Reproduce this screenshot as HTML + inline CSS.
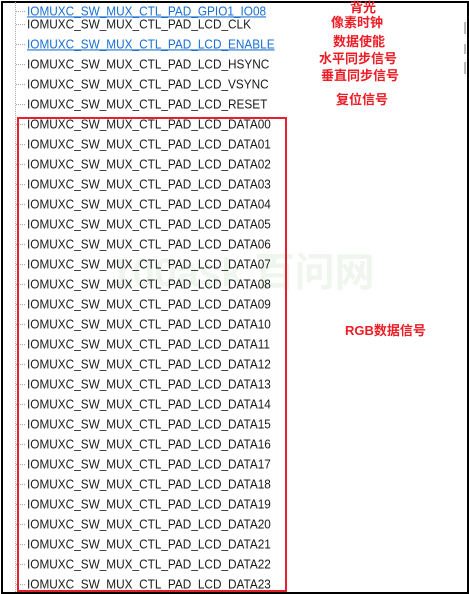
<!DOCTYPE html>
<html><head><meta charset="utf-8"><style>
body{margin:0;width:469px;height:594px;background:#fff;position:relative;overflow:hidden;font-family:"Liberation Sans","Noto Sans CJK SC",sans-serif}
.frame{position:absolute;left:1px;top:1px;width:464px;height:589px;border:2px solid #000}
.vl{position:absolute;left:15px;top:2px;height:590px;border-left:1px dotted #aaa}
.r{position:absolute;left:27px;font-size:11.8px;color:#1a1a1a;line-height:14px;white-space:nowrap;transform:scaleY(1.08)}
.r:before{content:"";position:absolute;left:-11px;top:7px;width:9px;border-top:1px dotted #aaa}
.l{color:#1a6fd0;text-decoration:underline}
.box{position:absolute;left:17px;top:117px;width:266px;height:471px;border:2px solid #e8202a}
.c{position:absolute;color:#ee1c25;font-weight:bold;font-size:13px;white-space:nowrap;line-height:15px}
.wm{position:absolute;left:110px;top:240px;font-size:40px;font-weight:bold;color:#eef6ee}
.sb{position:absolute;left:464px;width:2px;background:#bbb}
</style></head><body>
<div class="frame"></div>
<div class="vl"></div>
<div class="wm">100ask 百问网</div>
<div class="sb" style="top:22px;height:12px"></div>
<div class="sb" style="top:44px;height:10px"></div>
<div class="sb" style="top:62px;height:12px"></div>
<div class="r l" style="top:4px">IOMUXC_SW_MUX_CTL_PAD_GPIO1_IO08</div>
<div class="r" style="top:17px">IOMUXC_SW_MUX_CTL_PAD_LCD_CLK</div>
<div class="r l" style="top:37px">IOMUXC_SW_MUX_CTL_PAD_LCD_ENABLE</div>
<div class="r" style="top:57px">IOMUXC_SW_MUX_CTL_PAD_LCD_HSYNC</div>
<div class="r" style="top:77px">IOMUXC_SW_MUX_CTL_PAD_LCD_VSYNC</div>
<div class="r" style="top:97px">IOMUXC_SW_MUX_CTL_PAD_LCD_RESET</div>
<div class="r" style="top:117px">IOMUXC_SW_MUX_CTL_PAD_LCD_DATA00</div>
<div class="r" style="top:137px">IOMUXC_SW_MUX_CTL_PAD_LCD_DATA01</div>
<div class="r" style="top:157px">IOMUXC_SW_MUX_CTL_PAD_LCD_DATA02</div>
<div class="r" style="top:177px">IOMUXC_SW_MUX_CTL_PAD_LCD_DATA03</div>
<div class="r" style="top:197px">IOMUXC_SW_MUX_CTL_PAD_LCD_DATA04</div>
<div class="r" style="top:217px">IOMUXC_SW_MUX_CTL_PAD_LCD_DATA05</div>
<div class="r" style="top:237px">IOMUXC_SW_MUX_CTL_PAD_LCD_DATA06</div>
<div class="r" style="top:257px">IOMUXC_SW_MUX_CTL_PAD_LCD_DATA07</div>
<div class="r" style="top:277px">IOMUXC_SW_MUX_CTL_PAD_LCD_DATA08</div>
<div class="r" style="top:297px">IOMUXC_SW_MUX_CTL_PAD_LCD_DATA09</div>
<div class="r" style="top:317px">IOMUXC_SW_MUX_CTL_PAD_LCD_DATA10</div>
<div class="r" style="top:337px">IOMUXC_SW_MUX_CTL_PAD_LCD_DATA11</div>
<div class="r" style="top:357px">IOMUXC_SW_MUX_CTL_PAD_LCD_DATA12</div>
<div class="r" style="top:377px">IOMUXC_SW_MUX_CTL_PAD_LCD_DATA13</div>
<div class="r" style="top:397px">IOMUXC_SW_MUX_CTL_PAD_LCD_DATA14</div>
<div class="r" style="top:417px">IOMUXC_SW_MUX_CTL_PAD_LCD_DATA15</div>
<div class="r" style="top:437px">IOMUXC_SW_MUX_CTL_PAD_LCD_DATA16</div>
<div class="r" style="top:457px">IOMUXC_SW_MUX_CTL_PAD_LCD_DATA17</div>
<div class="r" style="top:477px">IOMUXC_SW_MUX_CTL_PAD_LCD_DATA18</div>
<div class="r" style="top:497px">IOMUXC_SW_MUX_CTL_PAD_LCD_DATA19</div>
<div class="r" style="top:517px">IOMUXC_SW_MUX_CTL_PAD_LCD_DATA20</div>
<div class="r" style="top:537px">IOMUXC_SW_MUX_CTL_PAD_LCD_DATA21</div>
<div class="r" style="top:557px">IOMUXC_SW_MUX_CTL_PAD_LCD_DATA22</div>
<div class="r" style="top:577px">IOMUXC_SW_MUX_CTL_PAD_LCD_DATA23</div>
<div class="box"></div>
<div class="c" style="left:350px;top:0px">背光</div>
<div class="c" style="left:331px;top:15px">像素时钟</div>
<div class="c" style="left:333px;top:34px">数据使能</div>
<div class="c" style="left:319px;top:51px">水平同步信号</div>
<div class="c" style="left:321px;top:68px">垂直同步信号</div>
<div class="c" style="left:336px;top:92px">复位信号</div>
<div class="c" style="left:345px;top:323px">RGB数据信号</div>
</body></html>
